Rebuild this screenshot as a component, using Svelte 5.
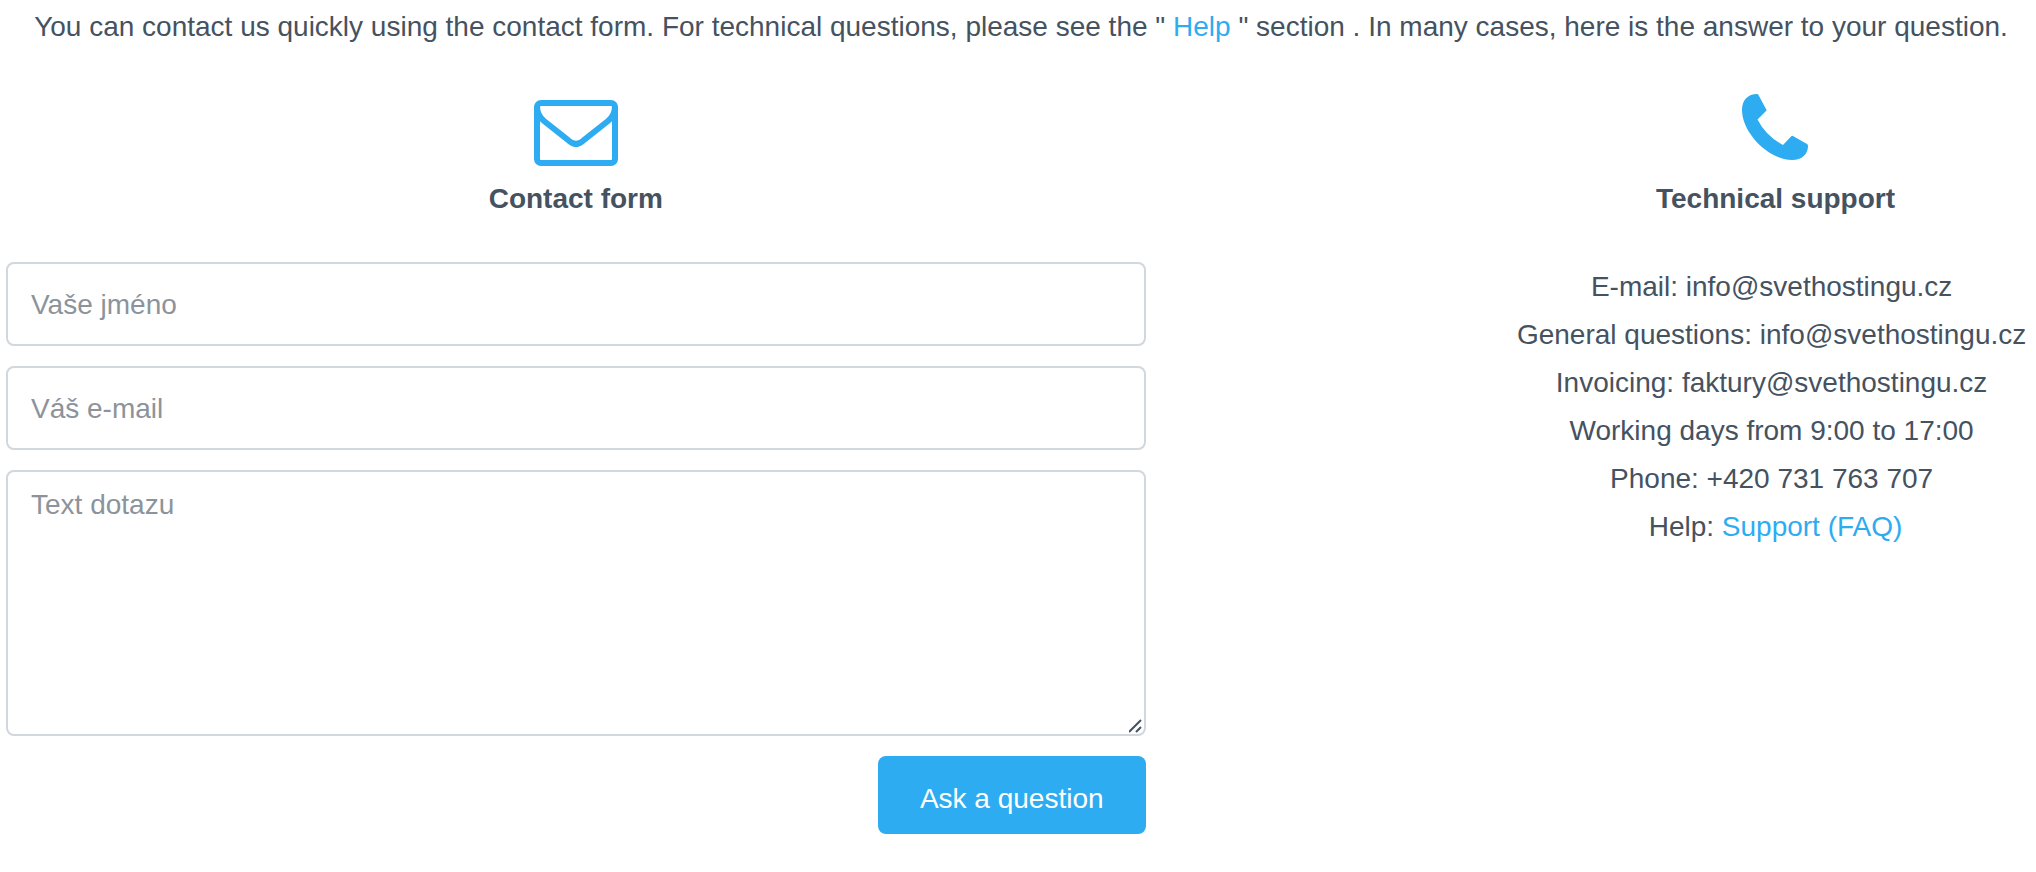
<script>
	let name = $state('');
	let email = $state('');
	let message = $state('');

	const contacts = [
		'E-mail: info@svethostingu.cz',
		'General questions: info@svethostingu.cz',
		'Invoicing: faktury@svethostingu.cz',
		'Working days from 9:00 to 17:00',
		'Phone: +420 731 763 707'
	];

	function submitForm(event) {
		event.preventDefault();
	}
</script>

<main class="contact">
	<p class="intro">
		You can contact us quickly using the contact form. For technical questions, please see the "
		<a href="#help">Help</a> " section . In many cases, here is the answer to your question.
	</p>

	<div class="columns">
		<section class="column">
			<svg class="icon" viewBox="0 0 84 84" aria-hidden="true">
				<rect x="3" y="12" width="78" height="60" rx="4" />
				<path d="M3 15 C3 22 5 26 10 30 L34 49 Q42 57 50 49 L74 30 C79 26 81 22 81 15" />
			</svg>
			<h2>Contact form</h2>

			<form onsubmit={submitForm}>
				<input type="text" placeholder="Vaše jméno" aria-label="Vaše jméno" bind:value={name} />
				<input type="email" placeholder="Váš e-mail" aria-label="Váš e-mail" bind:value={email} />
				<textarea rows="5" placeholder="Text dotazu" aria-label="Text dotazu" bind:value={message}></textarea>
				<button type="submit">Ask a question</button>
			</form>
		</section>

		<section class="column">
			<svg class="icon phone" viewBox="0 0 84 84" aria-hidden="true">
				<path d="M23 3 Q24 3 24.5 4 L32 18 Q33 19 32 20 L23.5 28.5 Q32 45 49 54 L57 45.5 Q58 44.5 59 45 L73 53 Q74 53.5 74 55 C74 63 68 69 58 69 C35 69 8 42 8 19 C8 9 14 3 23 3 Z" />
			</svg>
			<h2>Technical support</h2>

			<ul>
				{#each contacts as contact}
					<li>{contact}&nbsp;</li>
				{/each}
				<li>Help: <a href="#faq">Support (FAQ)</a></li>
			</ul>
		</section>
	</div>
</main>

<style>
	:global(body) {
		margin: 0;
		background: #fff;
	}

	.contact {
		padding: 3px 0 38px 6px;
		color: #45525f;
		font-family: Arial, "Liberation Sans", sans-serif;
		font-size: 28px;
		line-height: 48px;
	}

	.intro {
		margin: 0 0 40px;
		text-align: center;
	}

	a {
		color: #2eacf1;
		text-decoration: none;
	}

	a:hover {
		text-decoration: underline;
	}

	.columns {
		display: grid;
		grid-template-columns: 35fr 16fr;
		column-gap: 18.2%;
	}

	.column {
		display: flex;
		flex-direction: column;
		align-items: center;
	}

	.icon {
		width: 84px;
		height: 84px;
		fill: none;
		stroke: #2eacf1;
		stroke-width: 6;
	}

	.phone {
		fill: #2eacf1;
		stroke: none;
	}

	h2 {
		margin: 0 0 39px;
		font-size: 28px;
		line-height: 48px;
	}

	form {
		display: flex;
		flex-direction: column;
		gap: 20px;
		width: 100%;
	}

	input,
	textarea {
		box-sizing: border-box;
		width: 100%;
		margin: 0;
		padding: 13px 23px 11px;
		border: 2px solid #d1d7dc;
		border-radius: 8px;
		background: #fff;
		color: #45525f;
		font: inherit;
	}

	input {
		height: 84px;
	}

	textarea {
		display: block;
		height: 266px;
		padding-top: 9px;
		resize: vertical;
	}

	textarea::-webkit-resizer {
		background: url("data:image/svg+xml,%3Csvg xmlns='http://www.w3.org/2000/svg' width='15' height='15' fill='none' stroke='%2345525f' stroke-width='2'%3E%3Cpath d='M0 13L12 1M7 13L12 8'/%3E%3C/svg%3E") no-repeat;
	}

	input::placeholder,
	textarea::placeholder {
		color: #8c939a;
		opacity: 1;
	}

	button {
		align-self: flex-end;
		padding: 19px 42px 11px;
		border: 0;
		border-radius: 8px;
		background: #2eacf1;
		color: #fff;
		font: inherit;
		cursor: pointer;
	}

	ul {
		margin: 0;
		padding: 1px 0 0;
		list-style: none;
		text-align: center;
	}
</style>
